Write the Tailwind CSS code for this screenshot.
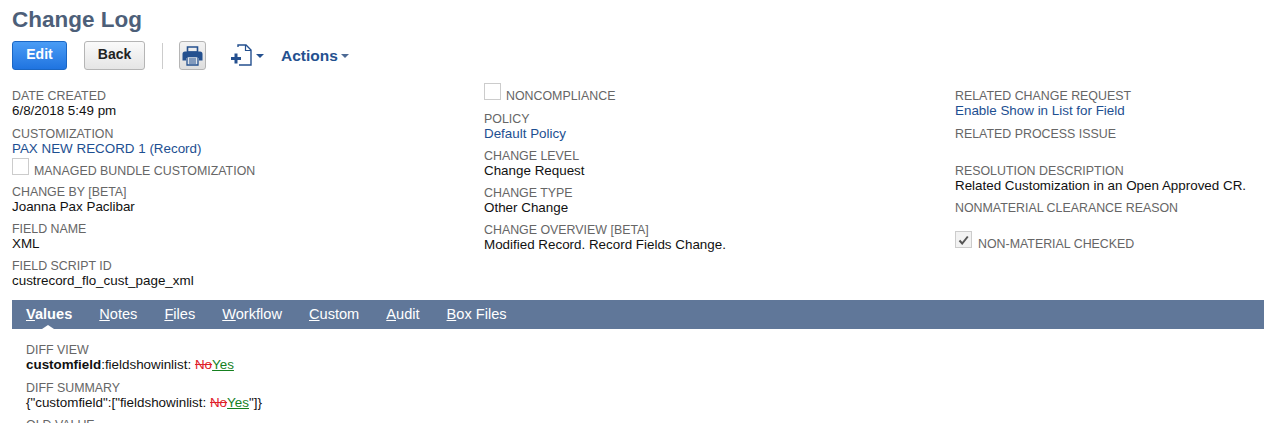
<!DOCTYPE html>
<html lang="en">
<head>
    <meta charset="UTF-8">
    <title>Change Log</title>
    <script src="https://cdn.jsdelivr.net/npm/@tailwindcss/browser@4"></script>
</head>
<body class="bg-white h-[423px] overflow-hidden font-['Liberation_Sans',Arial,sans-serif] text-[13.4px] leading-[15px] text-[#111]">
    <!-- Title -->
    <h1 class="pl-3 pt-[6px] h-[40px] text-[22.5px] leading-[27px] font-bold text-[#4d5f79]">Change Log</h1>

    <!-- Toolbar -->
    <div class="flex items-center pl-3 h-[31px]">
        <button class="w-[55px] h-[29px] pb-[2px] rounded-[3px] border border-[#1a66c4] bg-gradient-to-b from-[#4a9cf5] to-[#1f74e0] text-white text-[14px] font-bold">Edit</button>
        <button class="ml-[17px] w-[61px] h-[29px] pb-[2px] rounded-[3px] border border-[#b5b5b5] bg-gradient-to-b from-[#fafafa] to-[#e5e5e5] text-[#222] text-[14px] font-bold">Back</button>
        <div class="ml-[17px] w-px h-[26px] bg-[#ccc]"></div>
        <button class="ml-[16px] w-[27px] h-[29px] rounded-[3px] border border-[#b5b5b5] bg-gradient-to-b from-[#f3f3f3] to-[#dedede] flex items-center justify-center">
            <svg width="21" height="20" viewBox="0 0 21 20"><path d="M5.500 1h10v5h-10z" fill="none" stroke="#24508f" stroke-width="1.600"/><path d="M3 5.500h15a2.500 2.500 0 0 1 2.500 2.500v6.500h-3.500v-2.500H4v2.500H.5V8A2.500 2.500 0 0 1 3 5.500z" fill="#24508f"/><path d="M5 10.500h11v8.500H5z" fill="#dfe4ea" stroke="#24508f" stroke-width="1.300"/><path d="M7 13h7M7 15h7M7 17h7" stroke="#24508f"/></svg>
        </button>
        <svg class="ml-[24px]" width="22" height="23" viewBox="0 0 22 23" fill="none"><path d="M8 3V1h8l5 5v15H9" stroke="#24508f" stroke-width="1.400"/><path d="M15.500 1v5.500H21" stroke="#24508f" stroke-width="1.200"/><path d="M6 9.500v10M1 14.500h10" stroke="#24508f" stroke-width="3"/></svg>
        <div class="ml-[4px] w-0 h-0 border-x-[4px] border-x-transparent border-t-[4px] border-t-[#24508f]"></div>
        <span class="ml-[17px] text-[15.5px] font-bold text-[#24508f]">Actions</span>
        <div class="ml-[3px] w-0 h-0 border-x-[4px] border-x-transparent border-t-[4px] border-t-[#4d6a95]"></div>
    </div>

    <!-- Main fields -->
    <div class="grid grid-cols-[472px_471px_1fr] pl-3 pt-[17px] h-[229px]">
        <div class="flex flex-col gap-[7px]">
            <div><p class="h-[15px] pt-px text-[12.4px] text-[#666]">DATE CREATED</p><p>6/8/2018 5:49 pm</p></div>
            <div class="mt-[1px]"><p class="h-[15px] pt-px text-[12.4px] text-[#666]">CUSTOMIZATION</p><p class="text-[#1d4f91]">PAX NEW RECORD 1 (Record)</p></div>
            <div class="flex items-end -mt-[7px] h-[22px]"><span class="w-[17px] h-[17px] mb-[3px] border border-[#ccc] bg-white"></span><span class="ml-[5px] -mb-px text-[12.4px] text-[#666]">MANAGED BUNDLE CUSTOMIZATION</span></div>
            <div class="-mt-[1px]"><p class="h-[15px] pt-px text-[12.4px] text-[#666]">CHANGE BY [BETA]</p><p>Joanna Pax Paclibar</p></div>
            <div><p class="h-[15px] pt-px text-[12.4px] text-[#666]">FIELD NAME</p><p>XML</p></div>
            <div><p class="h-[15px] pt-px text-[12.4px] text-[#666]">FIELD SCRIPT ID</p><p>custrecord_flo_cust_page_xml</p></div>
        </div>
        <div class="flex flex-col gap-[7px]">
            <div class="flex items-end h-[23px] -mt-[8px]"><span class="w-[17px] h-[17px] mb-[3px] border border-[#ccc] bg-white"></span><span class="ml-[5px] -mb-px text-[12.4px] text-[#666]">NONCOMPLIANCE</span></div>
            <div class="mt-[1px]"><p class="h-[15px] pt-px text-[12.4px] text-[#666]">POLICY</p><p class="text-[#1d4f91]">Default Policy</p></div>
            <div><p class="h-[15px] pt-px text-[12.4px] text-[#666]">CHANGE LEVEL</p><p>Change Request</p></div>
            <div><p class="h-[15px] pt-px text-[12.4px] text-[#666]">CHANGE TYPE</p><p>Other Change</p></div>
            <div><p class="h-[15px] pt-px text-[12.4px] text-[#666]">CHANGE OVERVIEW [BETA]</p><p>Modified Record. Record Fields Change.</p></div>
        </div>
        <div class="flex flex-col gap-[7px]">
            <div><p class="h-[15px] pt-px text-[12.4px] text-[#666]">RELATED CHANGE REQUEST</p><p class="text-[#1d4f91]">Enable Show in List for Field</p></div>
            <div class="h-[30px] mt-[1px]"><p class="h-[15px] pt-px text-[12.4px] text-[#666]">RELATED PROCESS ISSUE</p></div>
            <div><p class="h-[15px] pt-px text-[12.4px] text-[#666]">RESOLUTION DESCRIPTION</p><p>Related Customization in an Open Approved CR.</p></div>
            <div class="h-[22px]"><p class="h-[15px] pt-px text-[12.4px] text-[#666]">NONMATERIAL CLEARANCE REASON</p></div>
            <div class="flex items-end h-[22px]">
                <span class="w-[17px] h-[17px] mb-[3px] border border-[#ccc] bg-[#f2f2f2] flex items-center justify-center">
                    <svg width="11" height="10" viewBox="0 0 11 10"><path d="M1.500 5.500 4.200 8.500 9.800 1.500" fill="none" stroke="#555" stroke-width="2"/></svg>
                </span>
                <span class="ml-[6px] -mb-px text-[12.4px] text-[#666]">NON-MATERIAL CHECKED</span>
            </div>
        </div>
    </div>

    <!-- Tabs -->
    <div class="relative ml-3 h-[29px] bg-[#607799] flex items-center pl-[14px] gap-[27px] text-[14.6px] text-white">
        <span class="font-bold"><u>V</u>alues</span>
        <span><u>N</u>otes</span>
        <span><u>F</u>iles</span>
        <span><u>W</u>orkflow</span>
        <span><u>C</u>ustom</span>
        <span><u>A</u>udit</span>
        <span><u>B</u>ox Files</span>
        <div class="absolute left-[30px] bottom-0 w-0 h-0 border-x-[6px] border-x-transparent border-b-[4px] border-b-white"></div>
    </div>

    <!-- Values tab -->
    <div class="pl-[26px] pt-[14px] flex flex-col gap-[8px]">
        <div class="h-[30px]"><p class="text-[12.4px] leading-[14px] text-[#666]">DIFF VIEW</p><p><b>customfield</b>:fieldshowinlist: <span class="text-[#e0202a] line-through">No</span><span class="text-[#15801f] underline">Yes</span></p></div>
        <div class="h-[29px]"><p class="text-[12.4px] leading-[14px] text-[#666]">DIFF SUMMARY</p><p>{"customfield":["fieldshowinlist: <span class="text-[#e0202a] line-through">No</span><span class="text-[#15801f] underline">Yes</span>"]}</p></div>
        <div><p class="text-[12.4px] text-[#666]">OLD VALUE</p></div>
    </div>
</body>
</html>
